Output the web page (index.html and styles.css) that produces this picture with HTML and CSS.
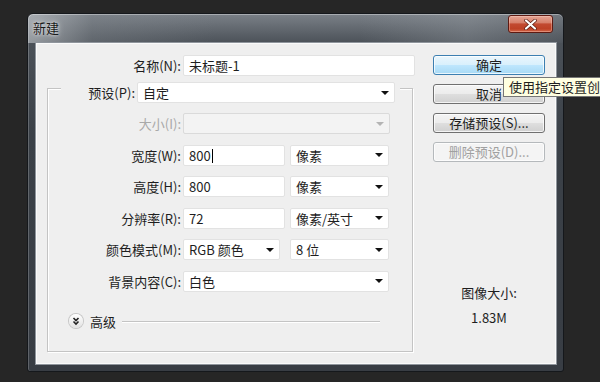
FILE: index.html
```html
<!DOCTYPE html>
<html lang="zh-CN">
<head>
    <meta charset="UTF-8">
    <title>新建</title>
    <link rel="stylesheet" href="styles.css">
</head>
<body>
    <div class="window">
        <div class="titlebar">
            <span class="title">新建</span>
            <div class="close">
                <svg width="13" height="11" viewBox="0 0 13 11">
                    <path d="M2 1.5 L11 9.5 M11 1.5 L2 9.5" stroke="#5a1a10" stroke-width="3.6" stroke-linecap="round"/>
                    <path d="M2 1.5 L11 9.5 M11 1.5 L2 9.5" stroke="#fff" stroke-width="2.2" stroke-linecap="round"/>
                </svg>
            </div>
        </div>

        <div class="client">
            <div class="main">
                <div class="name-row">
                    <label class="lbl name-lbl">名称(N):</label>
                    <div class="input name-input">未标题-1</div>
                </div>

                <div class="group">
                    <div class="group-head">
                        <label class="lbl head-lbl">预设(P):</label>
                        <div class="select preset">自定</div>
                    </div>

                    <div class="rows">
                        <label class="lbl off">大小(I):</label>
                        <div class="controls"><div class="select disabled w-size"></div></div>

                        <label class="lbl">宽度(W):</label>
                        <div class="controls">
                            <div class="input w-num focus">800<span class="caret"></span></div>
                            <div class="select w-unit">像素</div>
                        </div>

                        <label class="lbl">高度(H):</label>
                        <div class="controls">
                            <div class="input w-num">800</div>
                            <div class="select w-unit">像素</div>
                        </div>

                        <label class="lbl">分辨率(R):</label>
                        <div class="controls">
                            <div class="input w-num">72</div>
                            <div class="select w-unit">像素/英寸</div>
                        </div>

                        <label class="lbl">颜色模式(M):</label>
                        <div class="controls">
                            <div class="select w-mode">RGB 颜色</div>
                            <div class="select w-unit">8 位</div>
                        </div>

                        <label class="lbl">背景内容(C):</label>
                        <div class="controls"><div class="select w-full">白色</div></div>
                    </div>

                    <div class="advanced">
                        <span class="chevron">
                            <svg width="14" height="14" viewBox="0 0 14 14">
                                <path d="M4.5 4 L7 6.5 L9.5 4 M4.5 7.5 L7 10 L9.5 7.5" fill="none" stroke="#222" stroke-width="1.6"/>
                            </svg>
                        </span>
                        <span class="adv-text">高级</span>
                        <span class="adv-line"></span>
                    </div>
                </div>
            </div>

            <div class="side">
                <button class="btn default">确定</button>
                <button class="btn">取消</button>
                <button class="btn">存储预设(S)...</button>
                <button class="btn disabled">删除预设(D)...</button>

                <div class="size-info">
                    <p>图像大小:</p>
                    <p class="size-num">1.83M</p>
                </div>
            </div>
        </div>
    </div>

    <div class="tooltip">使用指定设置创建</div>
</body>
</html>
```

FILE: styles.css
```css
* {
    margin: 0;
    padding: 0;
    box-sizing: border-box;
}

body {
    position: relative;
    width: 600px;
    height: 382px;
    overflow: hidden;
    background: #262626;
    font-family: "Noto Sans CJK SC", "Liberation Sans", sans-serif;
    font-size: 13px;
    color: #1e1e1e;
}

.window {
    margin: 13px 0 0 27px;
    width: 537px;
    height: 359px;
    display: flex;
    flex-direction: column;
    padding: 0 6px 6px 7px;
    border: 1px solid #15181c;
    border-radius: 6px 6px 3px 3px;
    background:
        linear-gradient(90deg, rgba(200,204,208,.6) 0%, rgba(130,136,142,.35) 12%, rgba(40,46,53,0) 35%, rgba(0,0,0,0) 62%, rgba(150,156,162,.35) 82%, rgba(90,96,102,.25) 100%) top / 100% 29px no-repeat,
        linear-gradient(180deg, #7a8087 0, #4b5158 29px, #3b4148 120px, #383d44 100%);
    box-shadow: inset 0 1px 0 rgba(255,255,255,.35), inset 1px 0 0 rgba(255,255,255,.2);
}

.titlebar {
    height: 28px;
    display: flex;
    align-items: flex-start;
}

.title {
    margin: 6px 0 0 -2px;
    line-height: 16px;
    color: #1a1a1a;
    text-shadow: 0 0 6px rgba(230,232,235,.9), 0 0 3px rgba(230,232,235,.9);
}

.close {
    margin: 1px 4px 0 auto;
    width: 45px;
    height: 18px;
    display: flex;
    align-items: center;
    justify-content: center;
    border: 1px solid #5e1a12;
    border-radius: 3px;
    background: linear-gradient(180deg, #e6a595 0%, #d7806b 42%, #c24a31 50%, #bd4126 80%, #d2684a 100%);
    box-shadow: inset 0 0 0 1px rgba(255,220,210,.35);
}

.client {
    flex: 1;
    display: flex;
    padding: 12px 0 0 11px;
    background: #efefef;
    border: 1px solid #8f959c;
    box-shadow: inset 0 0 0 1px #fafafa;
}

.main {
    width: 368px;
}

.lbl {
    display: block;
    text-align: right;
    line-height: 21px;
    white-space: nowrap;
}

.lbl.off {
    color: #a9a9a9;
}

.name-row {
    display: flex;
    gap: 2px;
    height: 21px;
}

.name-lbl {
    width: 134px;
}

.input,
.select {
    height: 21px;
    line-height: 19px;
    padding-left: 5px;
    background: #fff;
    border: 1px solid #e2e2e2;
    border-radius: 2px;
    white-space: nowrap;
}

.name-input {
    width: 232px;
}

.select {
    display: flex;
    align-items: center;
    padding-right: 5px;
}

.select::after {
    content: "";
    margin-left: auto;
    border-left: 4px solid transparent;
    border-right: 4px solid transparent;
    border-top: 4px solid #111;
}

.select.disabled {
    background: #f3f3f3;
    border-color: #dadada;
}

.select.disabled::after {
    border-top-color: #b4b4b4;
}

.caret {
    display: inline-block;
    width: 1px;
    height: 14px;
    margin-left: 1px;
    background: #000;
    vertical-align: -2px;
}

.group {
    margin-top: 12px;
    width: 366px;
    height: 264px;
    border: 1px solid #c4c4c4;
    box-shadow: 1px 1px 0 #fff, inset 1px 1px 0 #fff;
}

.group-head {
    width: fit-content;
    display: flex;
    align-items: center;
    gap: 2px;
    height: 21px;
    margin: -7px 0 0 13px;
    padding: 0 5px 0 18px;
    background: #efefef;
}

.head-lbl {
    width: 56px;
}

.preset {
    width: 258px;
}

.rows {
    display: grid;
    grid-template-columns: 133px auto;
    grid-auto-rows: 21px;
    column-gap: 2px;
    row-gap: 10.6px;
    margin-top: 10px;
}

.controls {
    display: flex;
    gap: 5px;
}

.w-size { width: 207px; }
.w-num { width: 102px; }
.w-unit { width: 99px; }
.w-mode { width: 97px; margin-right: 5px; }
.w-full { width: 206px; }

.advanced {
    display: flex;
    align-items: center;
    height: 15px;
    margin: 22px 0 0 21px;
}

.chevron {
    width: 14px;
    height: 14px;
    display: flex;
    border-radius: 50%;
    background: linear-gradient(180deg, #ffffff, #e2e2e2);
    box-shadow: 0 0 0 1px #c6c6c6;
}

.adv-text {
    margin-left: 7px;
    line-height: 15px;
}

.adv-line {
    flex: 1;
    height: 1px;
    margin: 0 32px 0 6px;
    background: #c4c4c4;
    box-shadow: 0 1px 0 #fff;
}

.side {
    margin-left: 18px;
    width: 112px;
    display: flex;
    flex-direction: column;
}

.btn {
    display: block;
    width: 100%;
    height: 20px;
    margin-bottom: 9px;
    font: inherit;
    line-height: 18px;
    color: #1e1e1e;
    text-align: center;
    border: 1px solid #707070;
    border-radius: 3px;
    background: linear-gradient(180deg, #f4f4f4 0%, #ececec 48%, #dedede 52%, #d0d0d0 100%);
    box-shadow: inset 0 0 0 1px rgba(255,255,255,.75);
}

.btn.default {
    border-color: #3c7fb1;
    background: linear-gradient(180deg, #eaf6fd 0%, #d9f0fc 48%, #bee6fd 52%, #a7d9f5 100%);
}

.btn.disabled {
    color: #a0a0a0;
    border-color: #b5b9bc;
    background: #f4f4f4;
}

.size-info {
    margin-top: 115px;
    text-align: center;
    line-height: 14px;
}

.size-num {
    margin-top: 11px;
}

.tooltip {
    position: absolute;
    left: 503px;
    top: 77px;
    height: 20px;
    padding: 0 5px;
    line-height: 18px;
    white-space: nowrap;
    color: #1e1e1e;
    background: #ffffe1;
    border: 1px solid #767676;
}
```
